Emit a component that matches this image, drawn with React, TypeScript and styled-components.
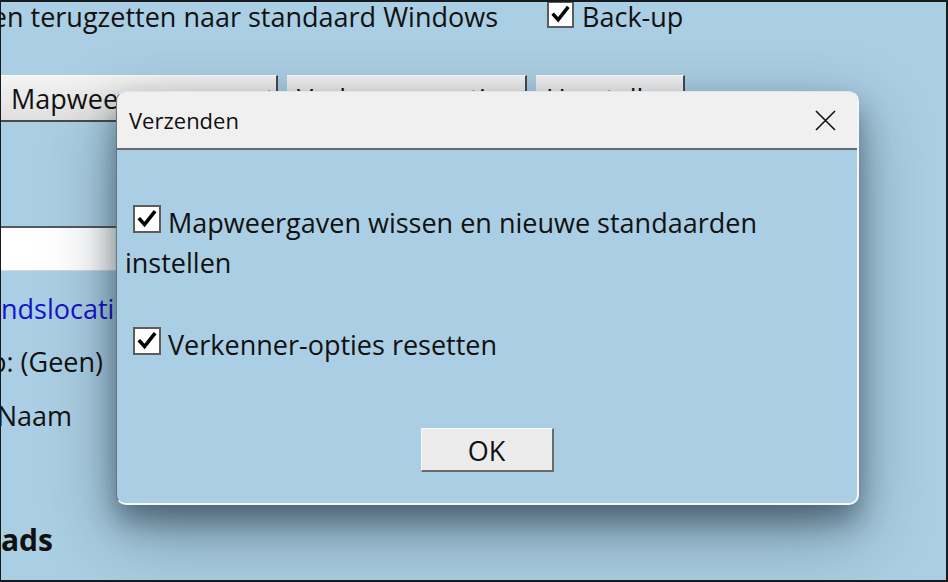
import React from "react";
import styled, { createGlobalStyle } from "styled-components";

const GlobalStyle = createGlobalStyle`
  html, body { margin: 0; padding: 0; background: #aacee3; }
  body { font-family: "Open Sans", "Noto Sans", sans-serif; }
  * { box-sizing: border-box; }
`;

const Frame = styled.div`
  position: relative;
  width: 948px;
  height: 582px;
  overflow: hidden;
  background: #aacee3;
  border-style: solid;
  border-color: #161b1e;
  border-width: 2px 2px 2px 1px;
  color: #111;
  font-size: 27px;
`;

const Page = styled.div`
  display: flex;
  flex-direction: column;
`;

const TopRow = styled.div`
  display: flex;
  align-items: flex-start;
  height: 34px;
  line-height: 34px;
  margin-top: -2px;
`;

const Anchored = styled.div<{ $end: number }>`
  display: flex;
  justify-content: flex-end;
  width: ${(p) => p.$end}px;
  flex-shrink: 0;
  white-space: nowrap;
`;

const BoxWrap = styled.span<{ $size: number }>`
  display: inline-block;
  flex-shrink: 0;
  width: ${(p) => p.$size}px;
  height: ${(p) => p.$size}px;
  background: #fff;
  border: 2px solid #5c5c5c;
  vertical-align: baseline;
  svg { display: block; width: 100%; height: 100%; }
`;

const TopCheck = styled.div`
  display: flex;
  align-items: flex-start;
  margin-left: 49px;
  ${BoxWrap} { margin-top: 1px; margin-right: 8px; }
`;

const ButtonRow = styled.div`
  display: flex;
  gap: 9px;
  margin-top: 41px;
`;

const PageButton = styled.div<{ $w: number }>`
  width: ${(p) => p.$w}px;
  height: 47px;
  line-height: 45px;
  padding: 0 10px;
  white-space: nowrap;
  overflow: hidden;
  background: linear-gradient(#f3f3f3, #e0e0e0);
  border-top: 1px solid #fbfbfb;
  border-right: 2px solid #4a4a4a;
  border-bottom: 2px solid #4a4a4a;
`;

const Field = styled.div`
  width: 520px;
  height: 45px;
  margin-top: 104px;
  background: #fff;
  border-top: 2px solid #505a60;
  border-bottom: 1px solid #d8d8d8;
`;

const InfoLine = styled.div<{ $gap: number }>`
  display: flex;
  line-height: 40px;
  white-space: nowrap;
  margin-top: ${(p) => p.$gap}px;
`;

const Link = styled.span`
  color: #1414c8;
`;

const Heading = styled(InfoLine)`
  font-size: 30px;
  font-weight: 700;
`;

const Dialog = styled.section`
  position: absolute;
  left: 115px;
  top: 89px;
  width: 743px;
  display: flex;
  flex-direction: column;
  background: #aacee3;
  border-radius: 10px;
  overflow: hidden;
  border-style: solid;
  border-width: 1px 2px 2px 1px;
  border-color: #e4e4e4 #f4f8fa #f4f8fa #68777f;
  box-shadow: 0 16px 28px rgba(15, 30, 42, 0.42), 0 26px 70px rgba(15, 30, 42, 0.38);
`;

const TitleBar = styled.header`
  display: flex;
  align-items: center;
  justify-content: space-between;
  height: 58px;
  padding: 0 21px 0 12px;
  background: #f0f0f0;
  border-bottom: 2px solid #6b6b6b;
`;

const Title = styled.h1`
  margin: 0;
  font-size: 22px;
  font-weight: 400;
  color: #111;
`;

const Close = styled.span`
  display: block;
  width: 21px;
  height: 21px;
  svg { display: block; }
`;

const Body = styled.div`
  display: flex;
  flex-direction: column;
  padding: 53px 10px 31px 8px;
`;

const Option = styled.p<{ $gap?: number }>`
  margin: ${(p) => p.$gap ?? 0}px 0 0 0;
  font-size: 27px;
  line-height: 40px;
  ${BoxWrap} { margin: 0 7px 0 8px; }
`;

const Footer = styled.div`
  display: flex;
  justify-content: center;
  margin-top: 63px;
  padding-left: 2px;
`;

const OkButton = styled.button`
  width: 133px;
  height: 44px;
  padding: 2px 0 0 0;
  font-family: inherit;
  font-size: 27px;
  color: #111;
  background: #ececec;
  border-style: solid;
  border-width: 1px 2px 2px 1px;
  border-color: #fafafa #6a6a6a #6a6a6a #fafafa;
`;

const Check = ({ size }: { size: number }) => (
  <BoxWrap $size={size}>
    <svg viewBox="0 0 24 24">
      <polyline
        points="5,12.5 9.5,17.5 19,5.5"
        fill="none"
        stroke="#000"
        strokeWidth="3.6"
        strokeLinecap="square"
      />
    </svg>
  </BoxWrap>
);

export default function App() {
  return (
    <>
      <GlobalStyle />
      <Frame>
        <Page>
          <TopRow>
            <Anchored $end={497}>Mappen terugzetten naar standaard Windows</Anchored>
            <TopCheck>
              <Check size={27} />
              Back-up
            </TopCheck>
          </TopRow>
          <ButtonRow>
            <PageButton $w={277}>Mapweergaven resetten</PageButton>
            <PageButton $w={240}>Verkenner-opties</PageButton>
            <PageButton $w={149}>Herstellen</PageButton>
          </ButtonRow>
          <Field />
          <InfoLine $gap={18}>
            <Anchored $end={0}>
              <Link>Achtergro</Link>
            </Anchored>
            <Link>ndslocatie wijzigen</Link>
          </InfoLine>
          <InfoLine $gap={13}>
            <Anchored $end={102}>Groeperen op: (Geen)</Anchored>
          </InfoLine>
          <InfoLine $gap={14}>
            <Anchored $end={71}>Sorteren op: Naam</Anchored>
          </InfoLine>
          <Heading $gap={84}>
            <Anchored $end={52}>Downloads</Anchored>
          </Heading>
        </Page>

        <Dialog>
          <TitleBar>
            <Title>Verzenden</Title>
            <Close>
              <svg width="21" height="21" viewBox="0 0 21 21">
                <path d="M1 1 L20 20 M20 1 L1 20" stroke="#111" strokeWidth="1.6" />
              </svg>
            </Close>
          </TitleBar>
          <Body>
            <Option>
              <Check size={28} />
              Mapweergaven wissen en nieuwe standaarden instellen
            </Option>
            <Option $gap={42}>
              <Check size={28} />
              Verkenner-opties resetten
            </Option>
            <Footer>
              <OkButton>OK</OkButton>
            </Footer>
          </Body>
        </Dialog>
      </Frame>
    </>
  );
}
